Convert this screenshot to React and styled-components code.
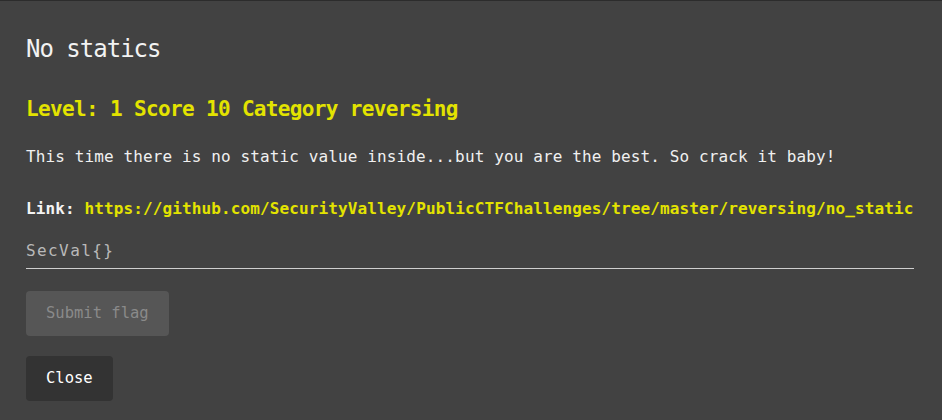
import React from "react";
import styled, { createGlobalStyle } from "styled-components";

const Global = createGlobalStyle`
  html, body { margin: 0; padding: 0; background: #424242; }
  body { font-family: "DejaVu Sans Mono", "Liberation Mono", monospace; }
  * { box-sizing: border-box; }
`;

const Modal = styled.div`
  width: 942px;
  height: 420px;
  background: #424242;
  border-top: 1px solid #2c2c2c;
  padding: 34px 28px 0 26px;
  display: flex;
  flex-direction: column;
  align-items: flex-start;
`;

const Title = styled.h2`
  margin: 0;
  font-size: 24px;
  line-height: 28px;
  font-weight: 400;
  letter-spacing: -1px;
  color: #f2f2f2;
`;

const Meta = styled.h3`
  margin: 34px 0 0;
  font-size: 21px;
  line-height: 24px;
  font-weight: 700;
  letter-spacing: -0.65px;
  color: #e3e300;
`;

const Text = styled.p`
  margin: ${(p) => p.$mt}px 0 0;
  font-size: 16px;
  line-height: 20px;
  letter-spacing: 0.12px;
  color: #f0f0f0;
  white-space: nowrap;
`;

const Label = styled.strong`
  font-weight: 700;
  color: #f4f4f4;
`;

const Url = styled.a`
  font-weight: 700;
  color: #e3e300;
  text-decoration: none;
`;

const FlagInput = styled.input`
  margin-top: 18px;
  width: 100%;
  background: transparent;
  border: none;
  border-bottom: 1px solid #cfcfcf;
  outline: none;
  padding: 4px 0 7px;
  font-family: inherit;
  font-size: 16px;
  line-height: 20px;
  letter-spacing: 1.4px;
  color: #f0f0f0;
  &::placeholder { color: #b9b9b9; opacity: 1; }
`;

const Button = styled.button`
  margin-top: ${(p) => p.$mt}px;
  height: 45px;
  padding: 0 20px;
  border: none;
  border-radius: 4px;
  font-family: inherit;
  font-size: 15.5px;
  line-height: 45px;
  background: ${(p) => (p.$disabled ? "#565656" : "#333333")};
  color: ${(p) => (p.$disabled ? "#8a8a8a" : "#ffffff")};
  cursor: ${(p) => (p.$disabled ? "default" : "pointer")};
`;

export default function App() {
  return (
    <>
      <Global />
      <Modal>
        <Title>No statics</Title>
        <Meta>Level: 1 Score 10 Category reversing</Meta>
        <Text $mt={26}>
          This time there is no static value inside...but you are the best. So crack it baby!
        </Text>
        <Text $mt={32}>
          <Label>Link:</Label>{" "}
          <Url href="#">https://github.com/SecurityValley/PublicCTFChallenges/tree/master/reversing/no_static</Url>
        </Text>
        <FlagInput placeholder="SecVal{}" />
        <Button $mt={22} $disabled>Submit flag</Button>
        <Button $mt={20}>Close</Button>
      </Modal>
    </>
  );
}
